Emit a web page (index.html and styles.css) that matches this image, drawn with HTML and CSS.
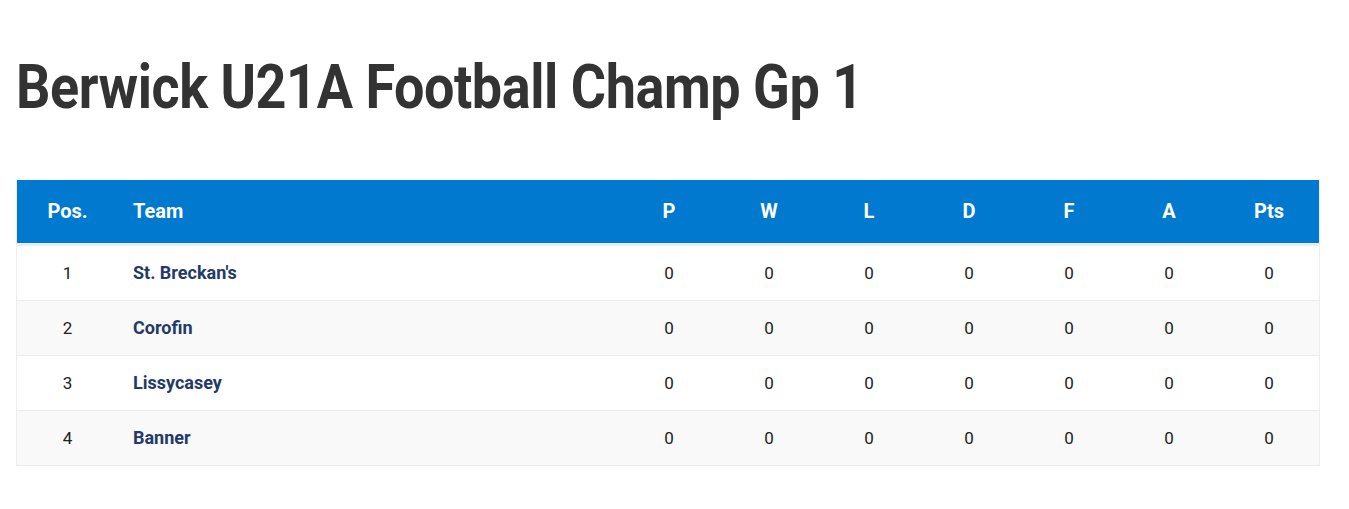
FILE: index.html
```html
<!DOCTYPE html>
<html>
<head>
<meta charset="utf-8">
<link rel="stylesheet" href="styles.css">
</head>
<body>
<div class="page">
  <h1 class="title">Berwick U21A Football Champ Gp 1</h1>
  <table class="league">
    <thead>
      <tr>
        <th class="pos">Pos.</th>
        <th class="team">Team</th>
        <th class="num">P</th>
        <th class="num">W</th>
        <th class="num">L</th>
        <th class="num">D</th>
        <th class="num">F</th>
        <th class="num">A</th>
        <th class="num">Pts</th>
      </tr>
    </thead>
    <tbody>
      <tr>
        <td class="pos">1</td><td class="team">St. Breckan's</td>
        <td class="num">0</td><td class="num">0</td><td class="num">0</td><td class="num">0</td><td class="num">0</td><td class="num">0</td><td class="num">0</td>
      </tr>
      <tr class="alt">
        <td class="pos">2</td><td class="team">Corofin</td>
        <td class="num">0</td><td class="num">0</td><td class="num">0</td><td class="num">0</td><td class="num">0</td><td class="num">0</td><td class="num">0</td>
      </tr>
      <tr>
        <td class="pos">3</td><td class="team">Lissycasey</td>
        <td class="num">0</td><td class="num">0</td><td class="num">0</td><td class="num">0</td><td class="num">0</td><td class="num">0</td><td class="num">0</td>
      </tr>
      <tr class="alt">
        <td class="pos">4</td><td class="team">Banner</td>
        <td class="num">0</td><td class="num">0</td><td class="num">0</td><td class="num">0</td><td class="num">0</td><td class="num">0</td><td class="num">0</td>
      </tr>
    </tbody>
  </table>
</div>
</body>
</html>
```

FILE: styles.css
```css
html, body {
  margin: 0;
  padding: 0;
  background: #fff;
}
body {
  font-family: Roboto, "Liberation Sans", sans-serif;
  color: #222;
}
.page {
  padding: 0 29px 0 16px;
}
.title {
  margin: 0;
  padding-top: 52px;
  height: 128px;
  box-sizing: border-box;
  font-family: Roboto, sans-serif;
  font-weight: 700;
  font-size: 62px;
  line-height: 70px;
  color: #333;
  letter-spacing: -0.5px;
  transform: scaleX(0.87);
  transform-origin: left center;
  white-space: nowrap;
}
.league {
  width: 1304px;
  border-collapse: collapse;
  table-layout: fixed;
  margin-top: 52px;
  border-left: 1px solid #eeeeee;
  border-right: 1px solid #eeeeee;
}
.league thead tr {
  background: #0079cf;
  height: 64px;
  border-bottom: 3px solid #e6eef6;
}
.league th {
  color: #fff;
  font-weight: 700;
  font-size: 20px;
  padding: 0;
}
.league td {
  font-size: 17px;
  height: 54px;
  padding: 0;
  border-bottom: 1px solid #ebebeb;
}
.league tbody tr.alt {
  background: #f9f9f9;
}
.pos {
  width: 101px;
  text-align: center;
}
.team {
  text-align: left;
  padding-left: 15px !important;
}
td.team {
  font-weight: 700;
  font-size: 18px !important;
  color: #233a66;
}
.num {
  width: 100px;
  text-align: center;
}
```
